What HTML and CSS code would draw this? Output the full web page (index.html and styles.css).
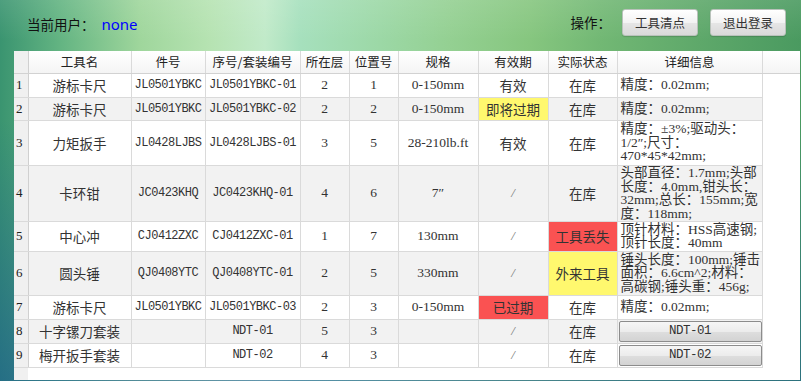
FILE: index.html
```html
<!DOCTYPE html>
<html lang="zh-CN">
<head>
<meta charset="utf-8">
<title>工具管理</title>
<link rel="stylesheet" href="styles.css">
</head>
<body>
<div class="page">
  <div class="topbar">
    <div class="user">
      <span class="label">当前用户：</span><span class="name">none</span>
    </div>
    <div class="ops">
      <span class="label">操作：</span>
      <button class="btn">工具清点</button>
      <button class="btn">退出登录</button>
    </div>
  </div>
  <div class="panel">
    <table class="grid">
      <colgroup>
        <col class="c-rn"><col class="c-name"><col class="c-part"><col class="c-seq"><col class="c-layer"><col class="c-pos"><col class="c-spec"><col class="c-valid"><col class="c-state"><col class="c-detail"><col class="c-fill">
      </colgroup>
      <thead>
        <tr class="head">
          <th class="rn"></th><th>工具名</th><th>件号</th><th>序号/套装编号</th><th>所在层</th><th>位置号</th><th>规格</th><th>有效期</th><th>实际状态</th><th>详细信息</th><th class="fill"></th>
        </tr>
      </thead>
      <tbody>
        <tr class="r1">
          <td class="rn">1</td><td class="cn">游标卡尺</td><td class="code">JL0501YBKC</td><td class="code">JL0501YBKC-01</td><td class="num">2</td><td class="num">1</td><td class="spec">0-150mm</td><td class="cn">有效</td><td class="cn">在库</td><td class="detail">精度：0.02mm;</td><td class="fill"></td>
        </tr>
        <tr class="r2 alt">
          <td class="rn">2</td><td class="cn">游标卡尺</td><td class="code">JL0501YBKC</td><td class="code">JL0501YBKC-02</td><td class="num">2</td><td class="num">2</td><td class="spec">0-150mm</td><td class="cn yellow">即将过期</td><td class="cn">在库</td><td class="detail">精度：0.02mm;</td><td class="fill"></td>
        </tr>
        <tr class="r3">
          <td class="rn">3</td><td class="cn">力矩扳手</td><td class="code">JL0428LJBS</td><td class="code">JL0428LJBS-01</td><td class="num">3</td><td class="num">5</td><td class="spec">28-210lb.ft</td><td class="cn">有效</td><td class="cn">在库</td><td class="detail">精度：±3%;驱动头：<br>1/2″;尺寸：<br>470*45*42mm;</td><td class="fill"></td>
        </tr>
        <tr class="r4 alt">
          <td class="rn">4</td><td class="cn">卡环钳</td><td class="code">JC0423KHQ</td><td class="code">JC0423KHQ-01</td><td class="num">4</td><td class="num">6</td><td class="spec">7″</td><td class="slash">/</td><td class="cn">在库</td><td class="detail">头部直径：1.7mm;头部<br>长度：4.0mm,钳头长：<br>32mm;总长：155mm;宽<br>度：118mm;</td><td class="fill"></td>
        </tr>
        <tr class="r5">
          <td class="rn">5</td><td class="cn">中心冲</td><td class="code">CJ0412ZXC</td><td class="code">CJ0412ZXC-01</td><td class="num">1</td><td class="num">7</td><td class="spec">130mm</td><td class="slash">/</td><td class="cn red">工具丢失</td><td class="detail">顶针材料：HSS高速钢;<br>顶针长度：40mm</td><td class="fill"></td>
        </tr>
        <tr class="r6 alt">
          <td class="rn">6</td><td class="cn">圆头锤</td><td class="code">QJ0408YTC</td><td class="code">QJ0408YTC-01</td><td class="num">2</td><td class="num">5</td><td class="spec">330mm</td><td class="slash">/</td><td class="cn yellow">外来工具</td><td class="detail">锤头长度：100mm;锤击<br>面积：6.6cm^2;材料：<br>高碳钢;锤头重：456g;</td><td class="fill"></td>
        </tr>
        <tr class="r7">
          <td class="rn">7</td><td class="cn">游标卡尺</td><td class="code">JL0501YBKC</td><td class="code">JL0501YBKC-03</td><td class="num">2</td><td class="num">3</td><td class="spec">0-150mm</td><td class="cn red">已过期</td><td class="cn">在库</td><td class="detail">精度：0.02mm;</td><td class="fill"></td>
        </tr>
        <tr class="r8 alt">
          <td class="rn">8</td><td class="cn">十字镙刀套装</td><td class="code"></td><td class="code">NDT-01</td><td class="num">5</td><td class="num">3</td><td class="spec"></td><td class="slash">/</td><td class="cn">在库</td><td class="btncell"><button class="cellbtn">NDT-01</button></td><td class="fill"></td>
        </tr>
        <tr class="r9">
          <td class="rn">9</td><td class="cn">梅开扳手套装</td><td class="code"></td><td class="code">NDT-02</td><td class="num">4</td><td class="num">3</td><td class="spec"></td><td class="slash">/</td><td class="cn">在库</td><td class="btncell"><button class="cellbtn">NDT-02</button></td><td class="fill"></td>
        </tr>
      </tbody>
    </table>
  </div>
</div>
</body>
</html>
```

FILE: styles.css
```css
html, body {
  margin: 0;
  padding: 0;
}

body {
  width: 801px;
  height: 381px;
  overflow: hidden;
  font-family: "Noto Sans CJK SC", "Noto Sans", sans-serif;
  background:
    linear-gradient(180deg, rgba(255,255,255,0.10) 0px, rgba(255,255,255,0) 40px, rgba(20,80,150,0) 120px, rgba(20,80,150,0.55) 381px),
    linear-gradient(90deg, #3a9470 0px, #63b482 60px, #9fd69c 140px, #b6e3b2 210px, #c1eac9 265px, #a6e0bd 300px, #9cd8a6 380px, #94d092 450px, #86c67f 530px, #72b874 600px, #5ea86a 700px, #4a9a60 801px);
}

.page {
  display: flex;
  flex-direction: column;
}

/* top bar */
.topbar {
  height: 51px;
  display: flex;
  align-items: center;
  justify-content: space-between;
  padding: 0 15px 0 27px;
  box-sizing: border-box;
}

.user {
  display: flex;
  align-items: baseline;
  margin-top: -3px;
}

.label {
  font-size: 13.5px;
  color: #111;
}

.name {
  font-family: "Noto Sans", sans-serif;
  font-size: 15px;
  color: #0000ff;
  margin-left: 7px;
}

.ops {
  display: flex;
  align-items: center;
  margin-top: -7px;
}

.ops .label {
  margin-right: 11px;
}

.btn {
  width: 76px;
  height: 27px;
  margin-left: 12px;
  padding: 0;
  border: 1px solid #b9c2bb;
  border-radius: 3px;
  background: linear-gradient(180deg, #ffffff 0%, #f3f3f3 50%, #e6e6e6 51%, #d9d9d9 100%);
  font-family: "Noto Sans CJK SC", sans-serif;
  font-size: 12.5px;
  color: #333;
  box-shadow: 0 1px 1px rgba(0,0,0,0.15);
}

.ops .label + .btn {
  margin-left: 0;
}

/* panel */
.panel {
  margin-left: 14px;
  width: 786px;
  height: 329px;
  background: linear-gradient(90deg, #f0f0f0 0px, #f0f0f0 14px, #ffffff 14px);
  overflow: hidden;
}

.grid {
  width: 786px;
  table-layout: fixed;
  border-collapse: collapse;
  font-family: "Liberation Serif", "Noto Sans CJK SC", serif;
  font-size: 13.5px;
  color: #333;
}

.c-rn { width: 14px; }
.c-name { width: 103px; }
.c-part { width: 74px; }
.c-seq { width: 95px; }
.c-layer { width: 49px; }
.c-pos { width: 49px; }
.c-spec { width: 80px; }
.c-valid { width: 70px; }
.c-state { width: 69px; }
.c-detail { width: 145px; }
.c-fill { width: 38px; }

.grid th,
.grid td {
  padding: 0;
  border-right: 1px solid #dadada;
  border-bottom: 1px solid #dadada;
  text-align: center;
  white-space: nowrap;
  overflow: hidden;
}

.head {
  height: 22px;
  background: linear-gradient(180deg, #ffffff 0%, #f4f4f4 100%);
}

.head th {
  font-family: "Noto Sans CJK SC", sans-serif;
  font-weight: normal;
  font-size: 12.5px;
  color: #222;
  border-bottom-color: #d2d2d2;
}

.grid th.fill {
  border-right: none;
}

.grid td.fill {
  border: none;
  background: #fff;
}

.grid .rn {
  background: #f0f0f0;
  text-align: left;
  padding-left: 2px;
  border-right-color: #d0d0d0;
  font-size: 13px;
  color: #222;
}

.alt td {
  background: #f2f2f2;
}

.alt td.rn {
  background: #f0f0f0;
}

.r1 { height: 24px; }
.r2 { height: 23px; }
.r3 { height: 45px; }
.r4 { height: 56px; }
.r5 { height: 30px; }
.r6 { height: 44px; }
.r7 { height: 24px; }
.r8 { height: 23px; }
.r9 { height: 23px; }

.cn {
  font-family: "Noto Sans CJK SC", sans-serif;
  font-size: 13.5px;
  color: #333;
}

.code {
  font-family: "Liberation Mono", monospace;
  font-size: 12px;
  letter-spacing: -0.5px;
  color: #333;
}

.num,
.spec {
  font-family: "Liberation Serif", serif;
  font-size: 13.5px;
}

.slash {
  font-family: "Liberation Serif", serif;
  font-style: italic;
  color: #777;
  font-size: 13px;
}

.detail {
  text-align: left !important;
  padding-left: 3px !important;
  line-height: 13.5px;
  font-family: "Liberation Serif", "Noto Sans CJK SC", serif;
  font-size: 13.5px;
  color: #333;
}

.grid td.yellow {
  background: #fff86e;
}

.grid td.red {
  background: #fa5252;
}

.btncell {
  padding: 1px 1px 1px 1px !important;
}

.cellbtn {
  display: block;
  width: 143px;
  height: 21px;
  padding: 0;
  border: 1px solid #8c8c8c;
  border-radius: 2px;
  background: linear-gradient(180deg, #f6f6f6 0%, #ececec 50%, #dedede 51%, #d3d3d3 100%);
  font-family: "Liberation Mono", monospace;
  font-size: 12.5px;
  letter-spacing: -0.5px;
  color: #333;
}
```
